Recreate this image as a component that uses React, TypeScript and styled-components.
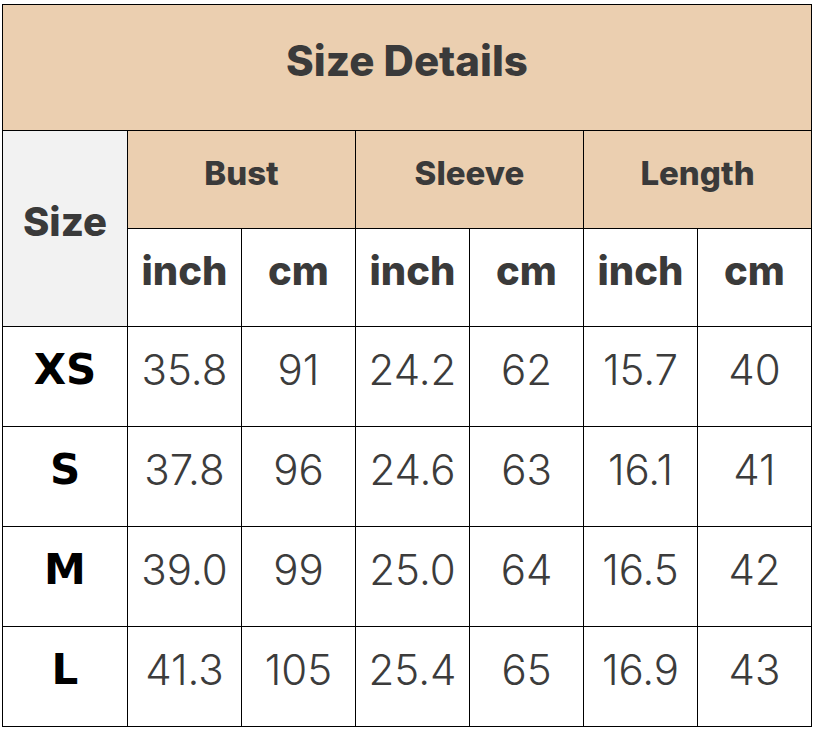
import React from "react";
import styled, { createGlobalStyle } from "styled-components";

const Global = createGlobalStyle`
  html, body { margin: 0; padding: 0; background: #fff; }
  body { padding: 4px 0 0 2px; }
`;

const Grid = styled.div`
  display: grid;
  grid-template-columns: 124px repeat(6, 113px);
  grid-template-rows: 125px 97px 97px repeat(4, 99px);
  gap: 1px;
  padding: 1px;
  background: #000;
  width: max-content;
`;

const Cell = styled.div<{ $bg?: string; $col?: string; $row?: string }>`
  display: flex;
  align-items: center;
  justify-content: center;
  padding-bottom: 13px;
  box-sizing: border-box;
  background: ${(p) => p.$bg || "#fff"};
  grid-column: ${(p) => p.$col || "auto"};
  grid-row: ${(p) => p.$row || "auto"};
`;

const HeadText = styled.span<{ $size: number }>`
  font-family: "Inter", "Noto Sans", sans-serif;
  font-weight: 800;
  font-size: ${(p) => p.$size}px;
  line-height: 1;
  color: #3a3a3a;
`;

const SizeLabel = styled.span`
  font-family: "DejaVu Sans", "Liberation Sans", sans-serif;
  font-weight: 700;
  font-size: 42px;
  line-height: 1;
  color: #000;
`;

const Num = styled.span`
  font-family: "Inter", "Noto Sans", sans-serif;
  font-weight: 300;
  font-size: 42px;
  line-height: 1;
  color: #3c3c3c;
`;

const TAN = "#ebcfb0";
const GREY = "#f2f2f2";

const rows: [string, string[]][] = [
  ["XS", ["35.8", "91", "24.2", "62", "15.7", "40"]],
  ["S", ["37.8", "96", "24.6", "63", "16.1", "41"]],
  ["M", ["39.0", "99", "25.0", "64", "16.5", "42"]],
  ["L", ["41.3", "105", "25.4", "65", "16.9", "43"]],
];

export default function App() {
  return (
    <>
      <Global />
      <Grid>
        <Cell $bg={TAN} $col="1 / span 7">
          <HeadText $size={42}>Size Details</HeadText>
        </Cell>
        <Cell $bg={GREY} $row="2 / span 2">
          <HeadText $size={40}>Size</HeadText>
        </Cell>
        {["Bust", "Sleeve", "Length"].map((h) => (
          <Cell key={h} $bg={TAN} $col="span 2">
            <HeadText $size={33}>{h}</HeadText>
          </Cell>
        ))}
        {[0, 1, 2].flatMap((i) => [
          <Cell key={`i${i}`}>
            <HeadText $size={40}>inch</HeadText>
          </Cell>,
          <Cell key={`c${i}`}>
            <HeadText $size={40}>cm</HeadText>
          </Cell>,
        ])}
        {rows.map(([s, vals]) => (
          <React.Fragment key={s}>
            <Cell>
              <SizeLabel>{s}</SizeLabel>
            </Cell>
            {vals.map((v, j) => (
              <Cell key={j}>
                <Num>{v}</Num>
              </Cell>
            ))}
          </React.Fragment>
        ))}
      </Grid>
    </>
  );
}
